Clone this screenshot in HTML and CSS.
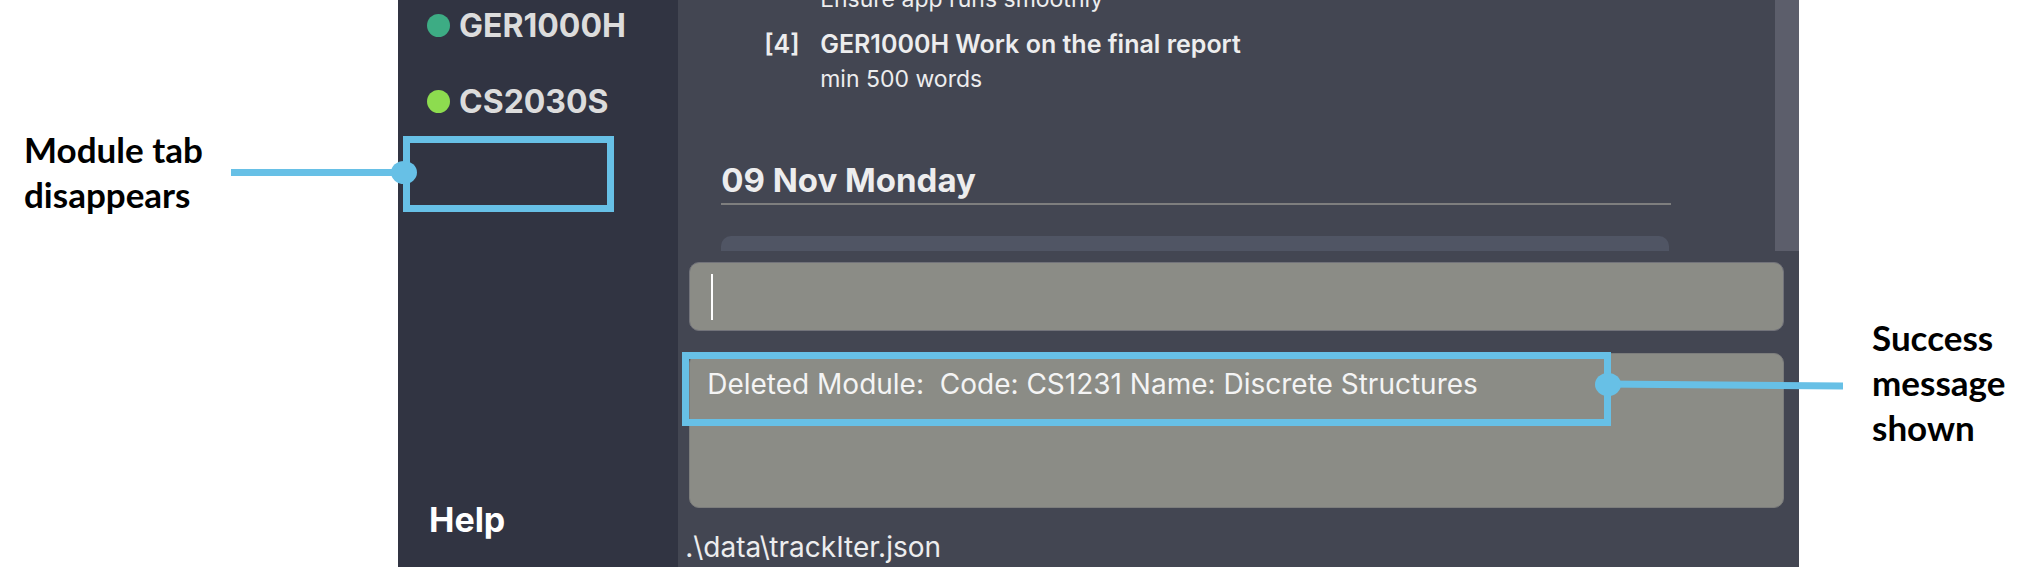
FILE: index.html
```html
<!DOCTYPE html>
<html lang="en">
<head>
<meta charset="utf-8">
<title>Trackr – delete module</title>
<link rel="stylesheet" href="styles.css">
</head>
<body>
<div class="page">
  <aside class="callout callout-left">
    <p class="callout-text">Module tab<br>disappears</p>
    <span class="callout-line"></span>
  </aside>

  <div class="app">
    <nav class="sidebar" aria-label="Modules">
      <ul class="modules">
        <li><a class="module" href="#ger1000h"><span class="dot dot-teal"></span>GER1000H</a></li>
        <li><a class="module" href="#cs2030s"><span class="dot dot-lime"></span>CS2030S</a></li>
      </ul>
      <a class="help" href="#help">Help</a>
      <div class="highlight highlight-tab"><span class="marker marker-left"></span></div>
    </nav>

    <main class="main">
      <div class="scroll">
        <div class="agenda">
          <article class="task">
            <p class="task-note">Ensure app runs smoothly</p>
          </article>
          <article class="task">
            <span class="task-index">[4]</span>
            <h3 class="task-title">GER1000H Work on the final report</h3>
            <p class="task-note">min 500 words</p>
          </article>
          <h2 class="day">09 Nov Monday</h2>
          <div class="card"></div>
        </div>
        <div class="scrollbar"></div>
      </div>

      <div class="command">
        <input class="command-input" type="text" aria-label="Command">
        <span class="caret"></span>
      </div>

      <div class="result">
        <output class="result-text">Deleted Module:&nbsp; Code: CS1231 Name: Discrete Structures</output>
        <div class="highlight highlight-message">
          <svg class="leader" width="240" height="16" viewBox="0 0 240 16" aria-hidden="true">
            <line x1="0" y1="7" x2="239" y2="9" stroke="#67c0e6" stroke-width="7"/>
          </svg>
          <span class="marker marker-right"></span>
        </div>
      </div>

      <footer class="status">.\data\trackIter.json</footer>
    </main>
  </div>

  <aside class="callout callout-right">
    <p class="callout-text">Success<br>message<br>shown</p>
  </aside>
</div>
</body>
</html>
```

FILE: styles.css
```css
* {
  box-sizing: border-box;
}

body {
  margin: 0;
  background: #fff;
  font-family: Inter, "Open Sans", sans-serif;
  overflow: hidden;
}

h2, h3, p, ul {
  margin: 0;
  padding: 0;
}

.page {
  display: grid;
  grid-template-columns: 398fr 1401fr 238fr;
  min-height: 100vh;
}

/* Callouts */

.callout {
  display: flex;
  align-items: flex-start;
  color: #000;
  font-family: Lato, "Open Sans", sans-serif;
}

.callout-left {
  gap: 28px;
  padding: 127px 0 0 24px;
}

.callout-right {
  padding: 315px 0 0 73px;
}

.callout-text {
  font-size: 35px;
  font-weight: 700;
  line-height: 45px;
}

.callout-line {
  flex: 1;
  height: 7px;
  margin-top: 42px;
  background: #67c0e6;
}

.highlight {
  position: absolute;
  border: 7px solid #67c0e6;
}

.highlight-tab {
  top: 136px;
  left: 5px;
  width: 211px;
  height: 76px;
}

.highlight-message {
  top: -2px;
  left: -8px;
  width: 85%;
  height: 74px;
}

.marker {
  position: absolute;
  width: 26px;
  height: 23px;
  border-radius: 50%;
  background: #67c0e6;
}

.marker-left {
  top: 18px;
  left: -19px;
}

.marker-right {
  top: 14px;
  right: -17px;
}

.leader {
  position: absolute;
  top: 18px;
  left: 100%;
}

/* Application window */

.app {
  display: grid;
  grid-template-columns: 1fr 4fr;
  background: #434652;
}

.sidebar {
  position: relative;
  display: flex;
  flex-direction: column;
  justify-content: space-between;
  padding: 0 29px 27px;
  background: #313442;
}

.modules {
  margin-top: -13px;
  list-style: none;
}

.module {
  display: flex;
  align-items: center;
  gap: 9px;
  height: 76px;
  color: #dcdcdc;
  font-size: 32px;
  font-weight: 700;
  text-decoration: none;
}

.dot {
  width: 23px;
  height: 23px;
  border-radius: 50%;
}

.dot-teal {
  background: #3dac84;
}

.dot-lime {
  background: #8ddc4f;
}

.help {
  padding-left: 2px;
  color: #fff;
  font-size: 34px;
  font-weight: 700;
  line-height: 40px;
  text-decoration: none;
}

.main {
  display: flex;
  flex-direction: column;
  color: #ededee;
}

.scroll {
  display: flex;
  height: 251px;
  overflow: hidden;
}

.agenda {
  flex: 1;
  margin-top: -17px;
  padding: 0 104px 0 43px;
}

.scrollbar {
  width: 24px;
  background: #5c5e6b;
}

.task {
  display: grid;
  grid-template-columns: 56px 1fr;
  margin-bottom: 11px;
  padding-left: 43px;
}

.task-index,
.task-title {
  font-size: 25px;
  font-weight: 600;
  line-height: 37px;
}

.task-note {
  grid-column: 2;
  font-size: 23px;
  line-height: 32px;
}

.day {
  margin: 63px 0 31px;
  border-bottom: 2px solid #7e7e7e;
  font-size: 33px;
  font-weight: 700;
  line-height: 45px;
}

.card {
  height: 60px;
  margin-right: 2px;
  border-radius: 10px;
  background: #505564;
}

.command {
  position: relative;
  margin: 11px 15px 22px 11px;
}

.command-input {
  display: block;
  width: 100%;
  height: 69px;
  padding: 0 20px;
  border: 1px solid #72737a;
  border-radius: 10px;
  background: #8b8c86;
  color: #fff;
  font: inherit;
  font-size: 28px;
}

.caret {
  position: absolute;
  top: 12px;
  left: 22px;
  width: 2px;
  height: 46px;
  background: #fff;
}

.result {
  position: relative;
  min-height: 155px;
  margin: 0 15px 21px 11px;
  padding: 12px 17px;
  border: 1px solid #7c7d7c;
  border-radius: 10px;
  background: #8b8c86;
}

.result-text {
  display: block;
  color: #f4f4f4;
  font-size: 28px;
  line-height: 36px;
}

.status {
  padding-left: 7px;
  font-size: 28px;
  line-height: 36px;
}
```
